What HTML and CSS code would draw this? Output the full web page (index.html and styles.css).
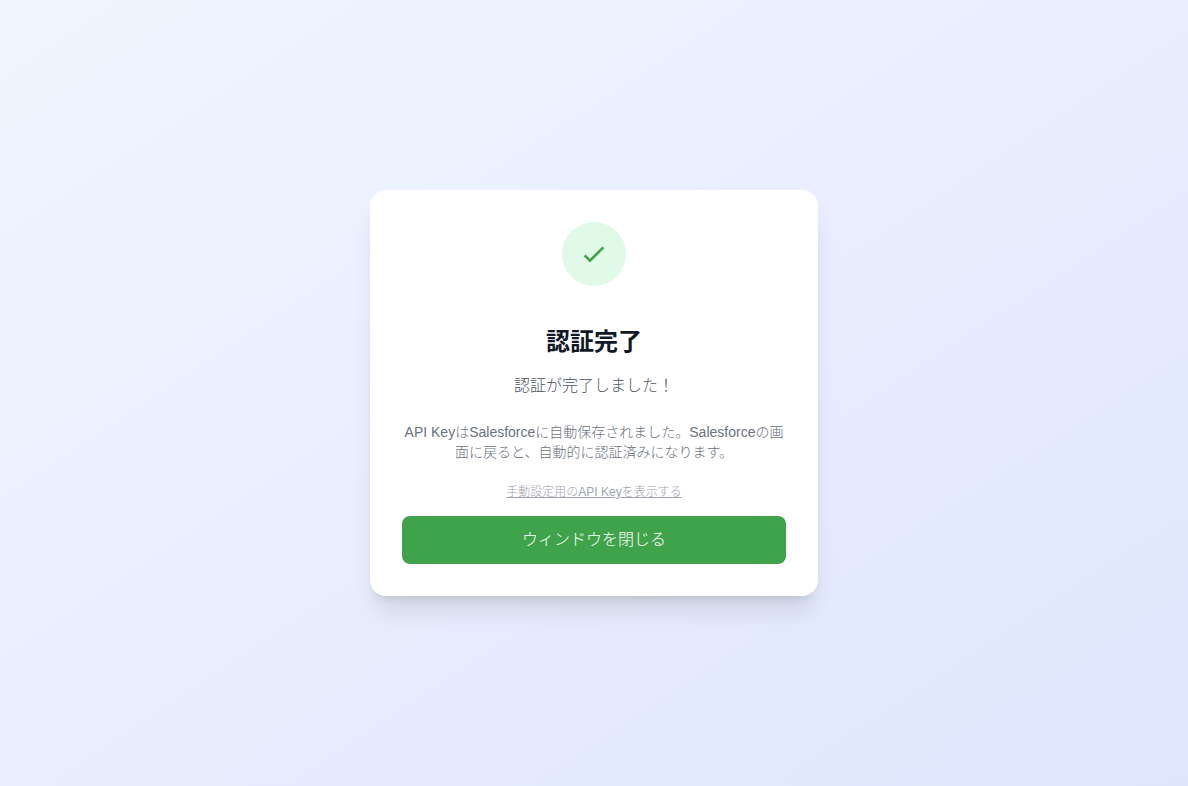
FILE: index.html
```html
<!DOCTYPE html>
<html lang="ja">
  <head>
    <meta charset="UTF-8" />
    <meta name="viewport" content="width=device-width, initial-scale=1.0" />
    <title>認証完了</title>
    <link rel="stylesheet" href="styles.css">
  </head>
  <body>
    <main class="card">
      <div class="icon-circle">
        <svg class="icon" viewBox="0 0 24 24" aria-hidden="true">
          <path d="M5 13l4 4L19 7" />
        </svg>
      </div>

      <h1 class="title">認証完了</h1>
      <p class="message">認証が完了しました！</p>
      <p class="description">
        API KeyはSalesforceに自動保存されました。Salesforceの画面に戻ると、自動的に認証済みになります。
      </p>

      <button class="link-button" type="button">手動設定用のAPI Keyを表示する</button>
      <button class="close-button" type="button" onclick="window.close()">ウィンドウを閉じる</button>
    </main>
  </body>
</html>
```
FILE: styles.css
```css
* {
  box-sizing: border-box;
}
body {
  margin: 0;
  padding: 16px;
  min-height: 100vh;
  display: flex;
  align-items: center;
  justify-content: center;
  background: linear-gradient(to bottom right, #f0f6ff, #e0e6fc);
  font-family: "Liberation Sans", "Noto Sans CJK JP", sans-serif;
  font-weight: 300;
}
button {
  border: 0;
  font-family: inherit;
  font-weight: inherit;
  cursor: pointer;
}

/* Card */
.card {
  display: flex;
  flex-direction: column;
  align-items: center;
  width: 100%;
  max-width: 448px;
  padding: 32px;
  border-radius: 16px;
  background: #fff;
  box-shadow: 0 20px 25px -5px rgba(0, 0, 0, 0.1),
    0 8px 10px -6px rgba(0, 0, 0, 0.1);
  text-align: center;
}
.icon-circle {
  display: flex;
  align-items: center;
  justify-content: center;
  width: 64px;
  height: 64px;
  margin-bottom: 40px;
  border-radius: 50%;
  background: #e0fae7;
}
.icon {
  width: 32px;
  height: 32px;
  fill: none;
  stroke: #43a047;
  stroke-width: 2;
}

/* Text */
.title {
  margin: 0 0 16px;
  color: #111827;
  font-size: 24px;
  line-height: 32px;
}
.message {
  margin: 0 0 24px;
  color: #4b5563;
  font-size: 16px;
  line-height: 24px;
}
.description {
  margin: 0 0 22px;
  color: #6b7280;
  font-size: 14px;
  line-height: 20px;
}

/* Buttons */
.link-button {
  margin-bottom: 16px;
  padding: 0;
  background: none;
  color: #9ca3af;
  font-size: 12px;
  line-height: 16px;
  text-decoration: underline;
}
.close-button {
  width: 100%;
  padding: 12px 16px;
  border-radius: 8px;
  background: #3fa34b;
  color: #fff;
  font-size: 16px;
  line-height: 24px;
}
```
